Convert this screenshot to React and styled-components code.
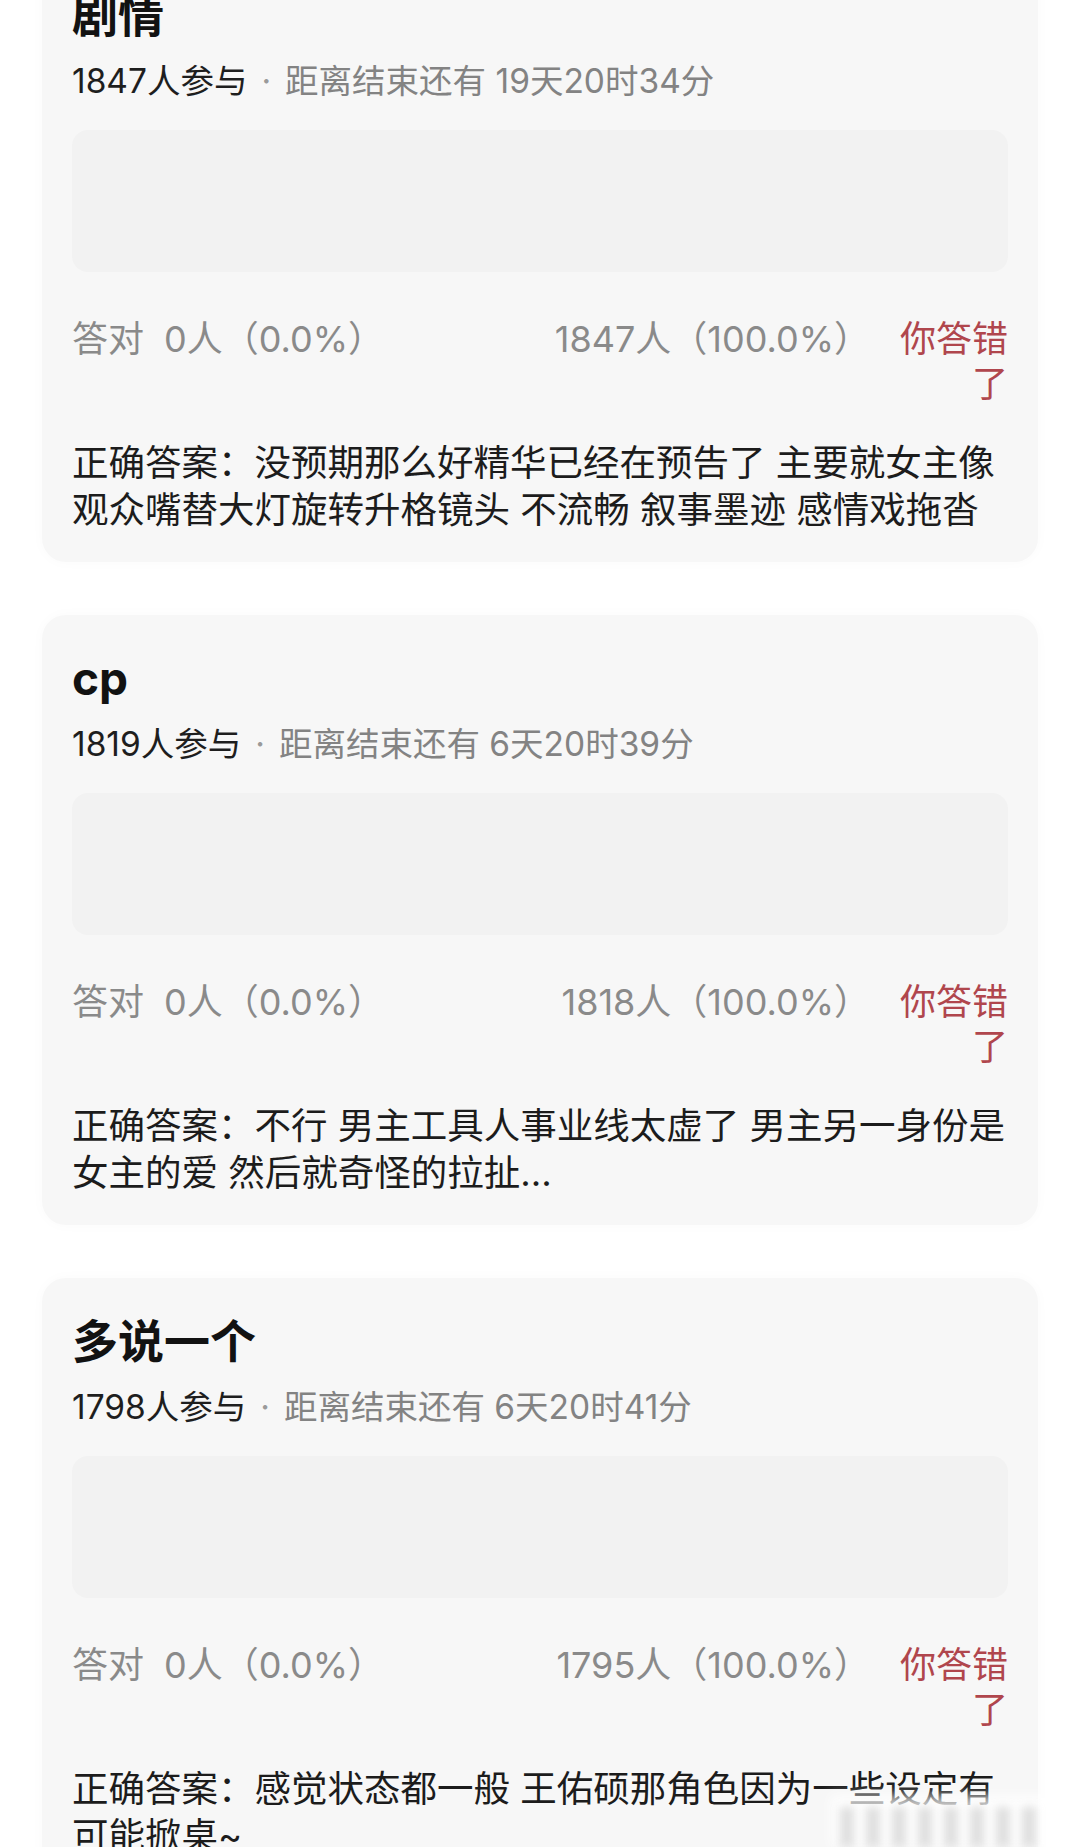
import React from "react";
import styled, { createGlobalStyle } from "styled-components";

const GlobalStyle = createGlobalStyle`
  html, body {
    margin: 0;
    padding: 0;
    background: #ffffff;
    overflow: hidden;
  }
  body {
    font-family: Inter, "Noto Sans CJK SC", sans-serif;
    -webkit-font-smoothing: antialiased;
  }
`;

const Page = styled.main`
  position: relative;
  width: 1080px;
  height: 1847px;
  overflow: hidden;
  background: #ffffff;
`;

const List = styled.div`
  display: flex;
  flex-direction: column;
  gap: 53px;
  padding: 0 42px;
  margin-top: -48px;
`;

const Card = styled.section`
  display: flex;
  flex-direction: column;
  padding: 35px 30px 28px;
  border-radius: 24px;
  background: #f7f7f7;
  box-shadow: 0 0 14px rgba(0, 0, 0, 0.025);
`;

const Title = styled.h2`
  margin: 0;
  font-size: 46px;
  line-height: 56px;
  font-weight: 700;
  color: #121212;
`;

const Meta = styled.div`
  margin-top: 16px;
  font-size: 33.5px;
  line-height: 44px;
  color: #1e1e1e;
  white-space: nowrap;
`;

const Muted = styled.span`
  color: #838383;
`;

const Dot = styled.span`
  display: inline-block;
  margin: 0 14px;
  color: #9a9a9a;
`;

const Placeholder = styled.div`
  margin-top: 27px;
  height: 142px;
  border-radius: 16px;
  background: #f2f2f2;
`;

const StatsRow = styled.div`
  margin-top: 45px;
  display: flex;
  justify-content: space-between;
  align-items: flex-start;
  font-size: 36px;
  line-height: 45px;
  color: #8a8a8a;
`;

const StatGroup = styled.div`
  display: flex;
  align-items: flex-start;
  gap: ${(p) => p.$gap}px;
  white-space: nowrap;
`;

const WrongTag = styled.div`
  width: 110px;
  text-align: right;
  color: #b0464d;
  white-space: normal;
`;

const Answer = styled.p`
  margin: 33px -8px 0 0;
  font-size: 36.5px;
  line-height: 47px;
  color: #1c1c1c;
`;

const Watermark = styled.div`
  position: absolute;
  right: 0;
  bottom: 0;
  width: 250px;
  height: 52px;
  pointer-events: none;
  background: rgba(255, 255, 255, 0.75);
  filter: blur(6px);
`;

const WatermarkBars = styled.div`
  position: absolute;
  right: 40px;
  bottom: 0;
  width: 200px;
  height: 40px;
  pointer-events: none;
  background: repeating-linear-gradient(
    90deg,
    rgba(170, 170, 170, 0.35) 0 14px,
    rgba(255, 255, 255, 0) 14px 26px
  );
  filter: blur(4px);
`;

const polls = [
  {
    title: "剧情",
    joined: 1847,
    left: "19天20时34分",
    wrong: 1847,
    answer:
      "没预期那么好精华已经在预告了 主要就女主像观众嘴替大灯旋转升格镜头 不流畅 叙事墨迹 感情戏拖沓",
  },
  {
    title: "cp",
    joined: 1819,
    left: "6天20时39分",
    wrong: 1818,
    answer: "不行 男主工具人事业线太虚了 男主另一身份是女主的爱 然后就奇怪的拉扯...",
  },
  {
    title: "多说一个",
    joined: 1798,
    left: "6天20时41分",
    wrong: 1795,
    answer: "感觉状态都一般 王佑硕那角色因为一些设定有可能掀桌~",
  },
];

function PollCard({ poll }) {
  return (
    <Card>
      <Title>{poll.title}</Title>
      <Meta>
        {poll.joined}人参与
        <Dot>·</Dot>
        <Muted>距离结束还有 {poll.left}</Muted>
      </Meta>
      <Placeholder />
      <StatsRow>
        <StatGroup $gap={20}>
          <span>答对</span>
          <span>0人（0.0%）</span>
        </StatGroup>
        <StatGroup $gap={28}>
          <span>{poll.wrong}人（100.0%）</span>
          <WrongTag>你答错了</WrongTag>
        </StatGroup>
      </StatsRow>
      <Answer>正确答案：{poll.answer}</Answer>
    </Card>
  );
}

export default function App() {
  return (
    <Page>
      <GlobalStyle />
      <List>
        {polls.map((p) => (
          <PollCard key={p.title} poll={p} />
        ))}
      </List>
      <Watermark />
      <WatermarkBars />
    </Page>
  );
}
